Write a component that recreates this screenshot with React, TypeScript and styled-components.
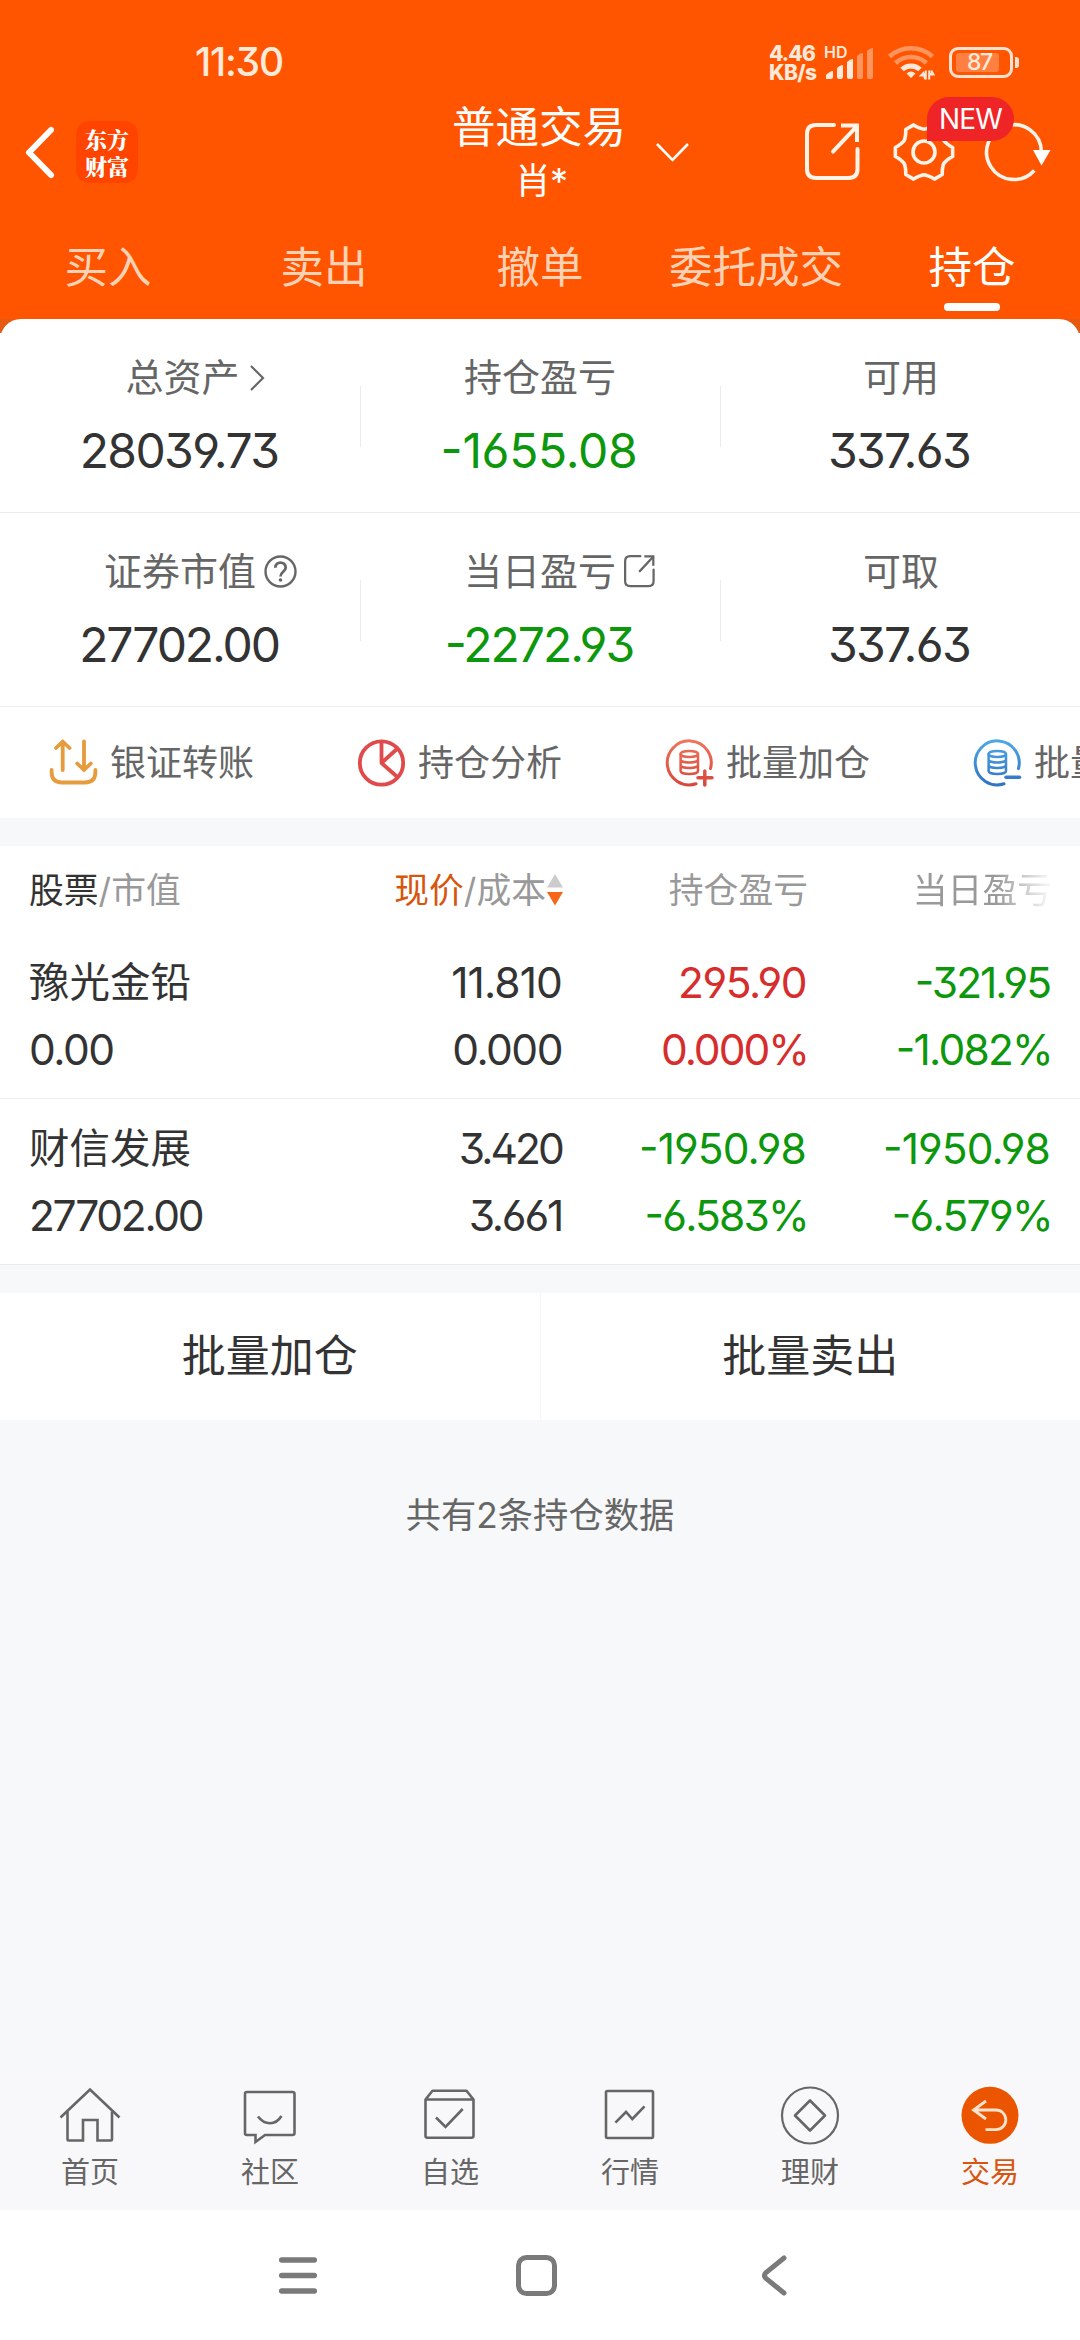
import React from 'react';
import styled, { createGlobalStyle } from 'styled-components';

const Global = createGlobalStyle`
  * { box-sizing: border-box; }
  body {
    margin: 0;
    background: #f7f8fa;
    font-family: 'Inter', 'Noto Sans CJK SC', sans-serif;
    color: #333;
    -webkit-font-smoothing: antialiased;
  }
  svg { display: block; flex: none; fill: none; overflow: visible; }
`;

const Screen = styled.div`
  width: 1080px;
  height: 2340px;
  display: flex;
  flex-direction: column;
  overflow: hidden;
  background: #f7f8fa;
`;

/* ---------- header ---------- */

const Header = styled.header`
  flex: none;
  height: 319px;
  background: #ff5500;
  color: #fff;
`;

const StatusBar = styled.div`
  display: flex;
  align-items: center;
  height: 124px;
  padding: 0 62px 0 195px;
  color: #ffe9da;
`;

const Clock = styled.span`
  width: 574px;
  font-size: 39px;
  font-weight: 500;
  line-height: 40px;
  letter-spacing: -1.2px;
  font-feature-settings: 'ss01', 'cv09';
`;

const Speed = styled.span<{ $track: number }>`
  display: block;
  height: 19px;
  font-size: 21px;
  font-weight: 800;
  line-height: 19px;
  letter-spacing: ${(p) => p.$track}px;
`;

const SpeedBox = styled.div`
  width: 55px;
  padding-top: 2px;
`;

const SignalBox = styled.div`
  width: 64px;
  height: 34px;
  margin-top: 2px;
`;

const Hd = styled.span`
  display: block;
  height: 12px;
  font-size: 16px;
  font-weight: 600;
  line-height: 12px;
`;

const Bars = styled.svg`
  margin: -10px 0 0 2px;
`;

const WifiSlot = styled.div`
  width: 61px;
`;

const Battery = styled.div`
  position: relative;
  width: 64px;
  height: 31px;
  padding: 3px 4px;
  border: 3px solid #ffe3d0;
  border-radius: 9px;
  &::after {
    content: '';
    position: absolute;
    right: -9px;
    top: 7px;
    width: 4px;
    height: 11px;
    border-radius: 0 3px 3px 0;
    background: #ffe3d0;
  }
`;

const Charge = styled.div`
  width: 43px;
  height: 19px;
  padding-left: 11px;
  border-radius: 3px;
  background: #ff8040;
  font-size: 23px;
  font-weight: 500;
  line-height: 19px;
  letter-spacing: -1.4px;
`;

const TitleBar = styled.div`
  display: flex;
  align-items: center;
  height: 98px;
  padding-left: 25px;
  margin-top: -21px;
`;

const Logo = styled.div`
  width: 62px;
  height: 62px;
  margin: 0 289px 0 22px;
  padding: 4px 0 0 9px;
  border-radius: 13px;
  background: #ff4400;
  font: 900 22px/27px 'Noto Serif CJK SC', 'Noto Sans CJK SC', sans-serif;
`;

const Title = styled.div`
  width: 223px;
  padding: 2px 0 0 1px;
  text-align: center;
  font-size: 43.5px;
  line-height: 56px;
`;

const Holder = styled.div`
  padding-left: 4px;
  font-size: 36px;
  line-height: 52px;
  letter-spacing: -1px;
`;

const DropArrow = styled.svg`
  margin: 0 116px 0 6px;
`;

const GearSlot = styled.div`
  position: relative;
  margin: 0 29px 0 34px;
`;

const NewBadge = styled.span`
  position: absolute;
  z-index: 1;
  left: 33px;
  top: -25px;
  width: 87px;
  height: 44px;
  border-radius: 22px 22px 22px 0;
  background: #ef2427;
  text-align: center;
  font: 400 28px/44px 'Inter', sans-serif;
  letter-spacing: -0.8px;
`;

const Tabs = styled.nav`
  display: grid;
  grid-template-columns: repeat(5, 1fr);
  height: 118px;
  padding-top: 35px;
`;

const Tab = styled.div<{ $active?: boolean }>`
  display: flex;
  flex-direction: column;
  align-items: center;
  font-size: 43.5px;
  line-height: 62px;
  color: ${(p) => (p.$active ? '#fff' : '#ffd2b6')};
  &::after {
    content: '';
    width: 56px;
    height: 8px;
    margin-top: 5px;
    border-radius: 4px;
    background: ${(p) => (p.$active ? '#fff' : 'transparent')};
  }
`;

/* ---------- account summary ---------- */

const CardBack = styled.div`
  flex: none;
  background: linear-gradient(#e45a12 14px, #fff 14px);
`;

const Card = styled.section`
  border-radius: 21px 21px 0 0;
  background: #fff;
`;

const StatRow = styled.div`
  display: flex;
  height: 194px;
  padding-top: 32px;
  border-bottom: 1px solid #ebebeb;
`;

const Stat = styled.div`
  flex: 1;
  display: flex;
  flex-direction: column;
  align-items: center;
  & + &::before {
    content: '';
    align-self: flex-start;
    width: 1px;
    height: 61px;
    margin: 35px 0 -96px;
    background: #ececec;
  }
`;

const StatLabel = styled.div<{ $shift?: number }>`
  display: flex;
  align-items: center;
  margin-left: ${(p) => p.$shift || 0}px;
  font-size: 38px;
  line-height: 53px;
  color: #666;
`;

const LabelIcon = styled.span<{ $size: number; $gap: number }>`
  width: ${(p) => p.$size}px;
  margin: 0 ${(p) => -p.$size - p.$gap}px 0 ${(p) => p.$gap}px;
`;

const StatValue = styled.div<{ $color: string; $track: number }>`
  margin: 16px 2px 0 0;
  font-size: 48px;
  line-height: 61px;
  letter-spacing: ${(p) => p.$track}px;
  color: ${(p) => p.$color};
  font-feature-settings: 'ss01', 'cv09', 'case';
`;

const Shortcuts = styled.div`
  display: flex;
  height: 111px;
  padding-left: 49px;
  overflow: hidden;
`;

const Shortcut = styled.div`
  flex: none;
  display: flex;
  align-items: center;
  gap: 13px;
  width: 308px;
  font-size: 36px;
  line-height: 52px;
  color: #666;
  white-space: nowrap;
`;

/* ---------- holdings ---------- */

const Table = styled.section`
  flex: none;
  margin-top: 28px;
  background: #fff;
`;

const Row = styled.div`
  display: grid;
  grid-template-columns: 303px 230px 244px 244px;
  padding: 0 30px 0 29px;
`;

const HeadRow = styled(Row)`
  height: 87px;
  align-items: center;
  font-size: 34.8px;
  line-height: 50px;
  color: #999;
`;

const HeadCell = styled.div<{ $right?: boolean; $fade?: boolean; $out?: number }>`
  display: flex;
  align-items: center;
  justify-content: ${(p) => (p.$right ? 'flex-end' : 'flex-start')};
  margin-right: ${(p) => -(p.$out || 0)}px;
  white-space: nowrap;
  ${(p) => p.$fade && 'mask-image: linear-gradient(90deg, #000 190px, rgba(0, 0, 0, 0.1) 242px);'}
`;

const Strong = styled.span<{ $color: string }>`
  color: ${(p) => p.$color};
`;

const SortArrows = styled.svg`
  margin: 0 -1px 0 1px;
`;

const HoldingRow = styled(Row)`
  height: 166px;
  padding-top: 16px;
  border-bottom: 1px solid #ebebeb;
`;

const Pair = styled.div<{ $right?: boolean; $color?: string }>`
  display: flex;
  flex-direction: column;
  align-items: ${(p) => (p.$right ? 'flex-end' : 'flex-start')};
  color: ${(p) => p.$color || '#333'};
`;

const StockName = styled.span`
  font-size: 40.5px;
  line-height: 67px;
`;

const Figure = styled.span<{ $track: number; $out?: number }>`
  font-size: 42.5px;
  line-height: 67px;
  letter-spacing: ${(p) => p.$track}px;
  margin-right: ${(p) => -(p.$out || 0)}px;
  font-feature-settings: 'ss01', 'cv09', 'case';
`;

const Actions = styled.div`
  flex: none;
  display: flex;
  height: 127px;
  margin-top: 28px;
  background: #fff;
`;

const Action = styled.div`
  flex: 1;
  text-align: center;
  font-size: 44px;
  line-height: 126px;
  & + & {
    border-left: 1px solid #f5f6f8;
  }
`;

const Summary = styled.div`
  flex: 1;
  padding-top: 70px;
  text-align: center;
  font-size: 35.3px;
  line-height: 52px;
  color: #666;
`;

/* ---------- bottom bars ---------- */

const BottomNav = styled.nav`
  flex: none;
  display: grid;
  grid-template-columns: repeat(6, 1fr);
  height: 136px;
  padding-top: 10px;
  background: #f8f8fa;
`;

const NavItem = styled.div<{ $active?: boolean }>`
  display: flex;
  flex-direction: column;
  align-items: center;
  font-size: 29px;
  line-height: 50px;
  color: ${(p) => (p.$active ? '#d9550f' : '#666')};
`;

const SystemNav = styled.div`
  flex: none;
  display: flex;
  align-items: center;
  height: 130px;
  padding-left: 279px;
  background: #fff;
`;

const SystemIcon = styled.svg<{ $after: number }>`
  margin-right: ${(p) => p.$after}px;
`;

/* ---------- drawings ---------- */

const gearPath = (() => {
  const at = (deg: number, r: number) => {
    const a = (deg * Math.PI) / 180;
    return `${(30 + r * Math.cos(a)).toFixed(2)} ${(30 + r * Math.sin(a)).toFixed(2)}`;
  };
  let d = `M${at(-9, 29)}`;
  for (let i = 0; i < 6; i += 1) {
    const base = i * 60;
    d += `L${at(base + 9, 29)}Q${at(base + 18, 24.5)} ${at(base + 22, 24)}`;
    d += `Q${at(base + 30, 22)} ${at(base + 38, 24)}Q${at(base + 42, 24.5)} ${at(base + 51, 29)}`;
  }
  return `${d}Z`;
})();

const ShareIcon = ({ size, color, width }: { size: number; color: string; width: number }) => (
  <svg width={size} height={size * 1.04} viewBox="0 0 55 57" stroke={color} strokeWidth={width}>
    <path d="M29 2H11Q2 2 2 11V46Q2 55 11 55H43.500Q52.500 55 52.500 46V26" strokeLinecap="round" />
    <path d="M28 28.500L51 4" strokeLinecap="round" />
    <path d="M36 2.500H52V19" />
  </svg>
);

const CoinIcon = ({ id, from, to, plus }: { id: string; from: string; to: string; plus?: boolean }) => (
  <svg width="48" height="48" stroke={`url(#${id})`} strokeWidth="3" strokeLinecap="round">
    <defs>
      <linearGradient id={id} gradientUnits="userSpaceOnUse" x1="0" y1="0" x2="0" y2="48">
        <stop offset="0" stopColor={from} />
        <stop offset="1" stopColor={to} />
      </linearGradient>
    </defs>
    <path d="M45.500 29.500A22 22 0 1 0 31 44.800" />
    <ellipse cx="24.300" cy="15" rx="8.700" ry="3" strokeWidth="2.500" />
    <path d="M15.600 15V32C15.600 36 33 36 33 32V15M15.600 20.500C15.600 24.500 33 24.500 33 20.500M15.600 26C15.600 30 33 30 33 26" strokeWidth="2.500" />
    {plus ? (
      <path d="M33 38.700H47M39.800 32V46" strokeWidth="3.500" />
    ) : (
      <path d="M33 38.300H46.500" strokeWidth="3.500" />
    )}
  </svg>
);

const navStroke = { width: 64, height: 64, stroke: '#666', strokeWidth: 2.6 };

const HomeIcon = () => (
  <svg {...navStroke}>
    <path d="M2.500 33.500L32 5.500L61.500 33.500" />
    <path d="M9.500 27.500V55.500Q9.500 56.500 10.500 56.500H25V36H39.500V56.500H53Q54 56.500 54 55.500V27.500" />
  </svg>
);

const CommunityIcon = () => (
  <svg {...navStroke}>
    <path d="M9 8H54.500Q56.500 8 56.500 10V49Q56.500 51 54.500 51H27L17.500 58V51H9Q7 51 7 49V10Q7 8 9 8Z" />
    <path d="M20 32.500Q25 39.200 32 39.200T43.500 32" />
  </svg>
);

const SelectedIcon = () => (
  <svg {...navStroke}>
    <path d="M14.500 6.800H48.500L55.500 15.500V51.800Q55.500 53.800 53.500 53.800H9.500Q7.500 53.800 7.500 51.800V15.500Z" strokeLinejoin="round" />
    <path d="M7.500 15.500H55.500M18 33.500L27.500 43L44.700 25" />
  </svg>
);

const MarketIcon = () => (
  <svg {...navStroke}>
    <rect x="8" y="7" width="47" height="47" rx="1.500" />
    <path d="M17.400 38.700L28 28L34.300 35L46.500 22.300" />
  </svg>
);

const FinanceIcon = () => (
  <svg {...navStroke}>
    <circle cx="32" cy="31.500" r="28" strokeWidth="2.200" />
    <path d="M32 16.500L47 31.500L32 46.500L17 31.500Z" strokeLinejoin="round" />
  </svg>
);

const TradeIcon = () => (
  <svg width="64" height="64" stroke="#ffe3cf" strokeWidth="2.800">
    <circle cx="32" cy="31.300" r="28.500" fill="#eb5500" stroke="none" />
    <path d="M28 17L15.500 26L28 35M15.500 26H38A9.800 9.800 0 0 1 38 45.700H27.500" />
  </svg>
);

const navItems = [
  { label: '首页', icon: <HomeIcon /> },
  { label: '社区', icon: <CommunityIcon /> },
  { label: '自选', icon: <SelectedIcon /> },
  { label: '行情', icon: <MarketIcon /> },
  { label: '理财', icon: <FinanceIcon /> },
  { label: '交易', icon: <TradeIcon />, active: true },
];

const INK = '#333';
const RED = '#d62d2d';
const GREEN = '#0c970c';

const stats = [
  [
    {
      label: '总资产',
      value: '28039.73',
      color: INK,
      track: -1.6,
      shift: 5,
      size: 14,
      gap: 10,
      icon: (
        <svg width="14" height="26" stroke="#666" strokeWidth="2.200">
          <path d="M1 1L13 13L1 25" />
        </svg>
      ),
    },
    { label: '持仓盈亏', value: '-1655.08', color: GREEN, track: -0.3 },
    { label: '可用', value: '337.63', color: INK, track: -1.7, shift: 2 },
  ],
  [
    {
      label: '证券市值',
      value: '27702.00',
      color: INK,
      track: -2.1,
      size: 33,
      gap: 8,
      icon: (
        <svg width="33" height="33" stroke="#666" strokeWidth="2.400">
          <circle cx="16.500" cy="16.500" r="15" />
          <path d="M11.300 12.800C11.300 5.800 21.700 5.800 21.700 12.800C21.700 16.300 16.500 16.800 16.500 21.500" strokeWidth="2.800" />
          <circle cx="16.500" cy="25" r="1.800" fill="#666" stroke="none" />
        </svg>
      ),
    },
    {
      label: '当日盈亏',
      value: '-2272.93',
      color: GREEN,
      track: -2,
      size: 31,
      gap: 8,
      icon: <ShareIcon size={31} color="#666" width={4} />,
    },
    { label: '可取', value: '337.63', color: INK, track: -1.7, shift: 2 },
  ],
];

type Fig = [string, number];
const holdings: { name: string; value: Fig; price: Fig[]; total: Fig[]; totalColor: string; day: Fig[] }[] = [
  {
    name: '豫光金铅',
    value: ['0.00', -1.5],
    price: [['11.810', -0.9], ['0.000', -1.5]],
    total: [['295.90', -1.5], ['0.000%', -2]],
    totalColor: RED,
    day: [['-321.95', -2], ['-1.082%', -1.8]],
  },
  {
    name: '财信发展',
    value: ['27702.00', -2.3],
    price: [['3.420', -2.9], ['3.661', -2.2]],
    total: [['-1950.98', -0.9], ['-6.583%', -1.8]],
    totalColor: GREEN,
    day: [['-1950.98', -0.9], ['-6.579%', -1.7]],
  },
];

const Figures = ({ items, color }: { items: Fig[]; color?: string }) => (
  <Pair $right $color={color}>
    {items.map(([text, track]) => (
      <Figure key={text} $track={track} $out={text.endsWith('%') ? 2 : 0}>{text}</Figure>
    ))}
  </Pair>
);

export default function App() {
  return (
    <Screen>
      <Global />
      <Header>
        <StatusBar>
          <Clock>11:30</Clock>
          <SpeedBox>
            <Speed $track={-0.9}>4.46</Speed>
            <Speed $track={-0.6}>KB/s</Speed>
          </SpeedBox>
          <SignalBox>
            <Hd>HD</Hd>
            <Bars width="48" height="31">
              <g fill="#ffe9da">
                <path d="M0 31V27Q4 23 7 23V29Q7 31 5 31Z" />
                <path d="M11 20Q14 17 17 17V29Q17 31 15 31H13Q11 31 11 29Z" />
                <path d="M21 14Q24 11 27 11V29Q27 31 25 31H23Q21 31 21 29Z" />
              </g>
              <g fill="#ff955e">
                <path d="M31 8Q34 5 37 5V29Q37 31 35 31H33Q31 31 31 29Z" />
                <path d="M41 3Q44 0 47 0V29Q47 31 45 31H43Q41 31 41 29Z" />
              </g>
            </Bars>
          </SignalBox>
          <WifiSlot>
            <svg width="47" height="34" strokeWidth="4.500">
              <path d="M1.500 11.500A32 32 0 0 1 44.500 11.500" stroke="#ff955e" />
              <path d="M7.500 18A23 23 0 0 1 38.500 18" stroke="#ff955e" />
              <path d="M14 24.500A13 13 0 0 1 32 24.500" stroke="#ffe9da" strokeWidth="5" />
              <path d="M18.500 28.500Q23 24.500 27.500 28.500L23 33Z" fill="#ffe9da" />
              <path d="M37.800 25.500V34.500M35.500 28L33 30.500H36.500L37 34ZM41.200 25.500V34.500M43.200 25.500L45.500 29.500H42" stroke="#ffe9da" strokeWidth="2" fill="#ffe9da" />
            </svg>
          </WifiSlot>
          <Battery>
            <Charge>87</Charge>
          </Battery>
        </StatusBar>

        <TitleBar>
          <svg width="29" height="51" stroke="#fff" strokeWidth="6" strokeLinecap="round" strokeLinejoin="round">
            <path d="M26 3L4 25.500L26 48" />
          </svg>
          <Logo>东方<br />财富</Logo>
          <Title>
            普通交易
            <Holder>肖*</Holder>
          </Title>
          <DropArrow width="33" height="19" stroke="#fff" strokeWidth="2.600">
            <path d="M1 1L16.500 17L32 1" />
          </DropArrow>
          <ShareIcon size={55} color="#fff3ea" width={4} />
          <GearSlot>
            <svg width="61" height="60" stroke="#fff3ea" strokeWidth="3.600" strokeLinejoin="round">
              <path d={gearPath} />
              <circle cx="30" cy="30" r="11" />
            </svg>
            <NewBadge>NEW</NewBadge>
          </GearSlot>
          <svg width="66" height="60" stroke="#fff3ea" strokeWidth="3.600">
            <path d="M50.300 48.500A27.400 27.400 0 1 1 57.400 30" />
            <path d="M49 28H66.500L57.500 43.500Z" fill="#fff" stroke="none" />
          </svg>
        </TitleBar>

        <Tabs>
          <Tab>买入</Tab>
          <Tab>卖出</Tab>
          <Tab>撤单</Tab>
          <Tab>委托成交</Tab>
          <Tab $active>持仓</Tab>
        </Tabs>
      </Header>

      <CardBack>
        <Card>
          {stats.map((row) => (
            <StatRow key={row[0].label}>
              {row.map((s) => (
                <Stat key={s.label}>
                  <StatLabel $shift={s.shift}>
                    {s.label}
                    {s.icon && <LabelIcon $size={s.size} $gap={s.gap}>{s.icon}</LabelIcon>}
                  </StatLabel>
                  <StatValue $color={s.color} $track={s.track}>{s.value}</StatValue>
                </Stat>
              ))}
            </StatRow>
          ))}
          <Shortcuts>
            <Shortcut>
              <svg width="48" height="48" stroke="#e69b3c" strokeWidth="3.800" strokeLinecap="round" strokeLinejoin="round">
                <path d="M13.700 31V2.500M7 9L13.700 2.500L20.500 9M35 2.500V31M28.200 24.500L35 31L41.800 24.500" />
                <path d="M2.600 31V33Q2.600 43.500 13 43.500H36Q46.400 43.500 46.400 33V31" />
              </svg>
              银证转账
            </Shortcut>
            <Shortcut>
              <svg width="48" height="48" stroke="#e04a4a" strokeWidth="3.800">
                <circle cx="24.500" cy="24" r="21.700" />
                <path d="M24.500 2V24L41 38.500M24.500 24L40.500 9.500" strokeLinejoin="round" />
              </svg>
              持仓分析
            </Shortcut>
            <Shortcut>
              <CoinIcon id="coinRed" from="#f0765c" to="#d6453b" plus />
              批量加仓
            </Shortcut>
            <Shortcut>
              <CoinIcon id="coinBlue" from="#4fa9e6" to="#2f72c2" />
              批量卖出
            </Shortcut>
          </Shortcuts>
        </Card>
      </CardBack>

      <Table>
        <HeadRow>
          <HeadCell><Strong $color="#333">股票</Strong>/市值</HeadCell>
          <HeadCell $right>
            <Strong $color="#d5560f">现价</Strong>/成本
            <SortArrows width="16" height="32" viewBox="0 0 16 32">
              <path d="M8 0L16 13.500H0Z" fill="#ccc" />
              <path d="M0 18H16L8 31.500Z" fill="#f5661b" />
            </SortArrows>
          </HeadCell>
          <HeadCell $right $out={2}>持仓盈亏</HeadCell>
          <HeadCell $right $fade $out={2}>当日盈亏</HeadCell>
        </HeadRow>
        {holdings.map((h) => (
          <HoldingRow key={h.name}>
            <Pair>
              <StockName>{h.name}</StockName>
              <Figure $track={h.value[1]}>{h.value[0]}</Figure>
            </Pair>
            <Figures items={h.price} />
            <Figures items={h.total} color={h.totalColor} />
            <Figures items={h.day} color={GREEN} />
          </HoldingRow>
        ))}
      </Table>

      <Actions>
        <Action>批量加仓</Action>
        <Action>批量卖出</Action>
      </Actions>
      <Summary>共有2条持仓数据</Summary>

      <BottomNav>
        {navItems.map((n) => (
          <NavItem key={n.label} $active={n.active}>
            {n.icon}
            {n.label}
          </NavItem>
        ))}
      </BottomNav>
      <SystemNav>
        <SystemIcon $after={199} width="38" height="37" stroke="#7a7a7a" strokeWidth="5.500" strokeLinecap="round">
          <path d="M2.700 3H35.300M2.700 18.500H35.300M2.700 34H35.300" />
        </SystemIcon>
        <SystemIcon $after={204} width="41" height="41" stroke="#7a7a7a" strokeWidth="5">
          <rect x="2.500" y="2.500" width="36" height="36" rx="8" />
        </SystemIcon>
        <SystemIcon $after={0} width="26" height="41" stroke="#7a7a7a" strokeWidth="5" strokeLinecap="round">
          <path d="M23 3L5 17.500Q2 20.500 5 23.500L23 38" />
        </SystemIcon>
      </SystemNav>
    </Screen>
  );
}
